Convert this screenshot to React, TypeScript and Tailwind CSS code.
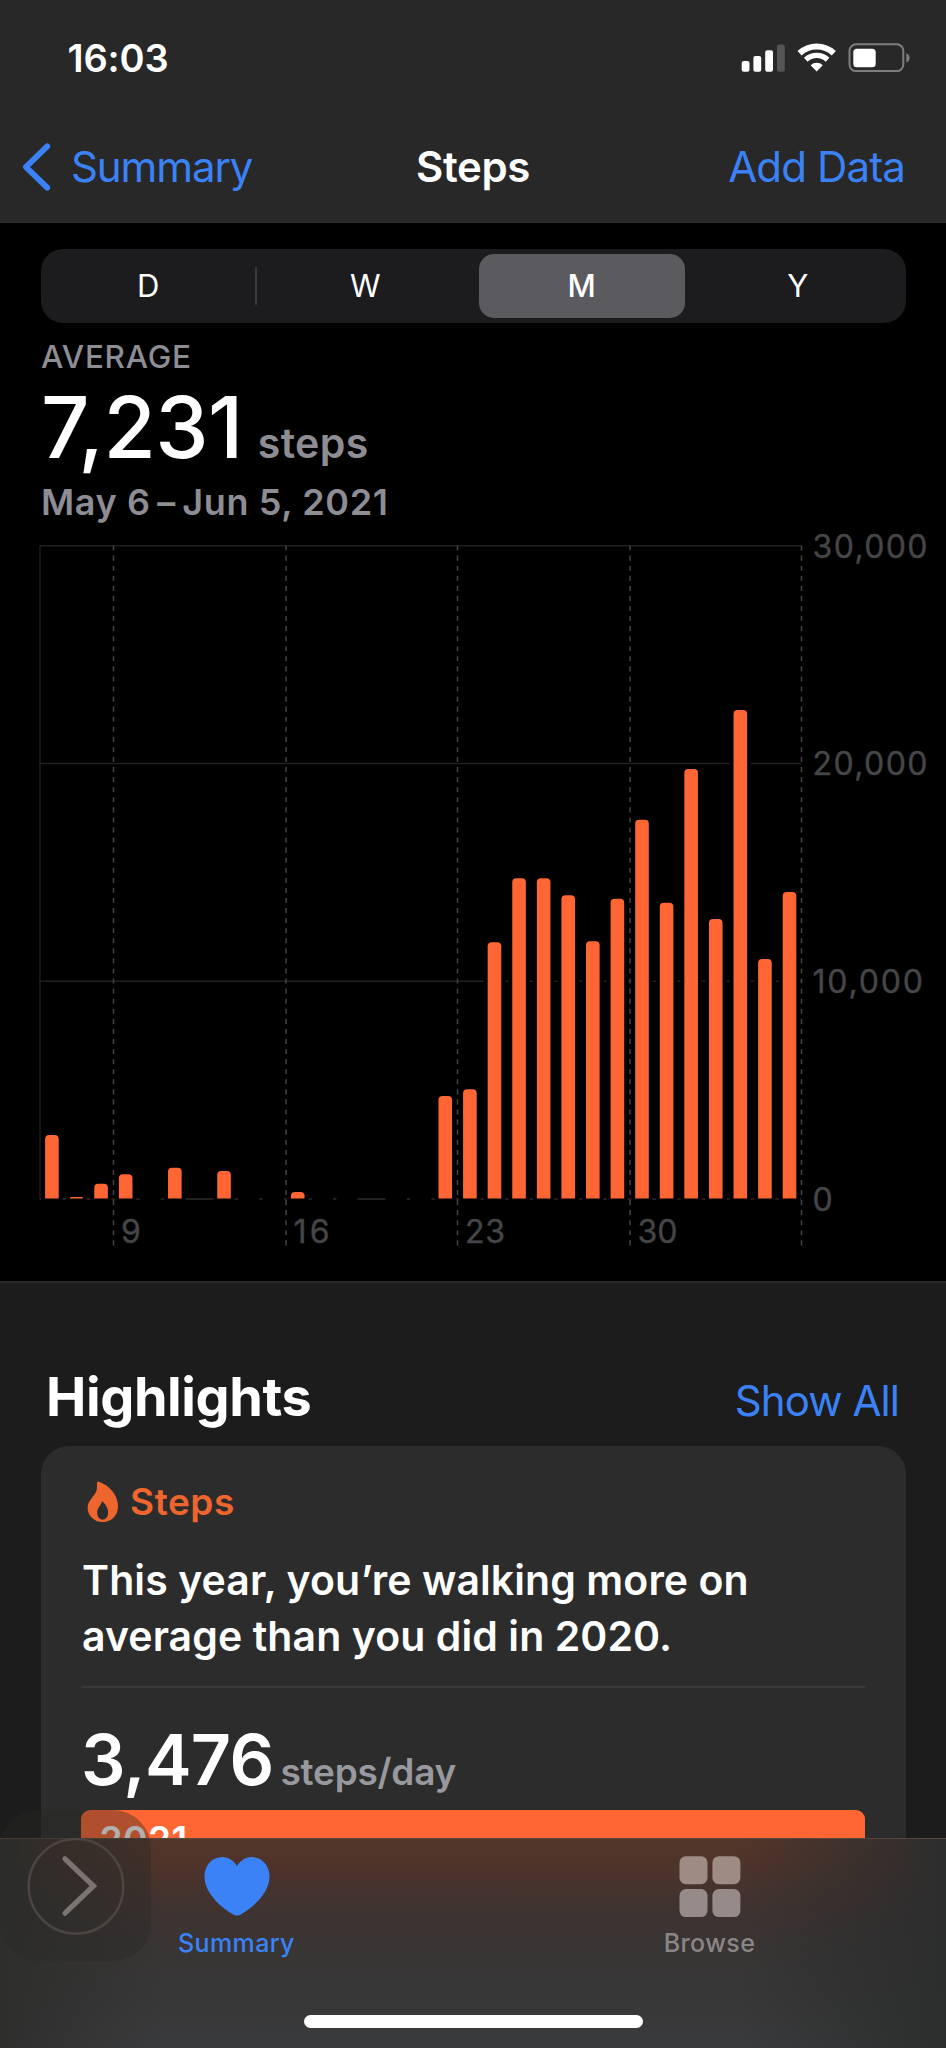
import { useState } from "react";
import { clsx } from "clsx";

type Bar = { day: number; top: number };

const ranges = ["D", "W", "M", "Y"];

// y of each bar's top on the chart canvas, day 0 is May 6
const bars: Bar[] = [
  { day: 0, top: 613 },
  { day: 1, top: 675 },
  { day: 2, top: 661.7 },
  { day: 3, top: 652.2 },
  { day: 5, top: 645.7 },
  { day: 7, top: 649 },
  { day: 10, top: 670 },
  { day: 16, top: 574 },
  { day: 17, top: 567.3 },
  { day: 18, top: 420.3 },
  { day: 19, top: 356.3 },
  { day: 20, top: 356.3 },
  { day: 21, top: 373.3 },
  { day: 22, top: 419.3 },
  { day: 23, top: 376.7 },
  { day: 24, top: 297.7 },
  { day: 25, top: 380.7 },
  { day: 26, top: 247 },
  { day: 27, top: 397 },
  { day: 28, top: 188 },
  { day: 29, top: 437 },
  { day: 30, top: 370 },
];

// days with too few steps to draw, they still interrupt the base line
const emptyDays = [4, 8, 9, 11, 12, 14, 15];

const BASE = 676.6;
const barX = (day: number) => 45.1 + day * 24.587;

const barPath = (x: number, top: number) => {
  const r = Math.min(4, BASE - top);
  const right = x + 13.6;
  return `M${x} ${BASE}V${top + r}Q${x} ${top} ${x + r} ${top}H${right - r}Q${right} ${top} ${right} ${top + r}V${BASE}Z`;
};

const yTicks = [
  { label: "30,000", y: 23.7, width: 113.5 },
  { label: "20,000", y: 241.5, width: 113.5 },
  { label: "10,000", y: 459.2, width: 109 },
  { label: "0", y: 677, width: 19 },
];

const xTicks = [
  { label: "9", x: 113.5, width: 19 },
  { label: "16", x: 286, width: 36 },
  { label: "23", x: 457.5, width: 40 },
  { label: "30", x: 630, width: 40 },
  { label: "", x: 801.5, width: 0 },
];

const StatusIcons = () => (
  <svg width="172" height="32" viewBox="740 42 172 32" fill="none">
    <rect x="741.7" y="61" width="7.8" height="10.8" rx="2" fill="#fff" />
    <rect x="753.4" y="56" width="7.8" height="15.8" rx="2" fill="#fff" />
    <rect x="765.2" y="50.3" width="7.8" height="21.5" rx="2" fill="#fff" />
    <rect x="777" y="44.4" width="7.8" height="27.4" rx="2" fill="#555" />
    <path d="M799.6 53.2A25 25 0 0 1 833.8 53.2" stroke="#fff" strokeWidth="6" />
    <path d="M805.8 59.7A16 16 0 0 1 827.6 59.7" stroke="#fff" strokeWidth="5.4" />
    <path d="M810.6 65.3A8.8 8.8 0 0 1 822.8 65.3L816.7 71.6Z" fill="#fff" />
    <rect x="849.5" y="44.3" width="53.8" height="26.8" rx="6.5" stroke="#7e7e7e" strokeWidth="2" />
    <rect x="853.3" y="48.7" width="22.4" height="18.6" rx="3.5" fill="#fff" />
    <path d="M906.3 53.3C908.4 54.2 909.6 55.8 909.6 57.9S908.4 61.6 906.3 62.5Z" fill="#7e7e7e" />
  </svg>
);

const FlameIcon = () => (
  <svg width="32" height="42" viewBox="0 0 32 42">
    <path
      fillRule="evenodd"
      fill="#ee652e"
      d="M9.9 2.3C9.7 1 10.8.4 12 .8C22.5 4.5 31 14 31 25.3C31 34.7 24.5 41 15.7 41C7 41 .6 35 .6 26.3C.6 17.8 10.8 14.500 10 5.2ZM14.7 21.1C13.6 25 10.2 27 10.2 31.7C10.2 35.6 12.3 38.5 15.7 38.5C19 38.5 21.1 35.8 21.1 31.5C21.1 27 18.500 23 15.7 20.8C15.2 20.5 14.9 20.5 14.7 21.1Z"
    />
  </svg>
);

const StepsChart = () => (
  <svg width="946" height="758" viewBox="0 0 946 758" className="block -ml-[41px]" fontFamily="Inter, sans-serif" fontSize="32" fill="#464649">
    <path d="M40 677V23.5" stroke="#1b1b1d" strokeWidth="1.5" />
    {yTicks.map((tick) => (
      <path key={tick.label} d={`M39.500 ${tick.y}H801.500`} stroke={tick.label === "0" ? "#2c2c2e" : "#202022"} strokeWidth="1.5" />
    ))}
    {[...emptyDays, ...bars.map((bar) => bar.day)].map((day) => {
      const bar = bars.find((b) => b.day === day);
      const top = (bar ? bar.top : BASE) - 4;
      return <rect key={day} x={barX(day) - 3.8} y={top} width="21.2" height={BASE + 1.5 - top} fill="#000" />;
    })}
    {xTicks.map((tick) => (
      <path key={tick.x} d={`M${tick.x} 23.500V726`} stroke="#434345" strokeWidth="1.5" strokeDasharray="5.1 4.97" />
    ))}
    {bars.map((bar) => (
      <path key={bar.day} d={barPath(barX(bar.day), bar.top)} fill="#ff6633" />
    ))}
    {yTicks.map((tick) => (
      <text key={tick.label} x="812.5" y={tick.y + 11.8} textLength={tick.width + 1.5} stroke="#464649" strokeWidth="0.4">
        {tick.label}
      </text>
    ))}
    {xTicks.map((tick) => (
      <text key={tick.x} x={tick.x + 7.5} y="721.2" textLength={tick.width || undefined} stroke="#464649" strokeWidth="0.4">
        {tick.label}
      </text>
    ))}
  </svg>
);

const App = () => {
  const [range, setRange] = useState("M");

  return (
    <div className="relative flex h-[2048px] w-[946px] flex-col overflow-hidden bg-black font-['Inter',sans-serif] text-white">
      {/* Header */}
      <header className="h-[223px] shrink-0 border-b border-[#2b2b2c] bg-[#282828]">
        <div className="flex h-[116px] items-center justify-between pl-[67.5px] pr-[34px]">
          <span className="text-[38px] font-semibold tracking-[-0.14px]">16:03</span>
          <StatusIcons />
        </div>
        <div className="grid h-[101px] grid-cols-[1fr_auto_1fr] items-center text-[42px] leading-[60px]">
          <button className="flex items-center gap-[19px] pl-[22px] text-[#3b82f7]">
            <svg width="30" height="50" viewBox="0 0 30 50" fill="none" className="shrink-0">
              <path d="M25.2 4.300L3.9 25L25.2 45.700" stroke="currentColor" strokeWidth="5.900" strokeLinecap="round" strokeLinejoin="round" />
            </svg>
            <span className="tracking-[-1.1px]">Summary</span>
          </button>
          <h1 className="font-semibold tracking-[-0.35px]">Steps</h1>
          <button className="pr-[41px] text-right tracking-[-0.85px] text-[#3b82f7]">Add Data</button>
        </div>
      </header>

      {/* Chart */}
      <main className="h-[1058px] shrink-0 px-[41px] pt-[26px]">
        <div className="flex h-[74px] w-[865px] rounded-[22px] bg-[#1c1c1e]">
          {ranges.map((item, index) => (
            <div key={item} className="flex flex-1 items-center">
              <button
                onClick={() => setRange(item)}
                className={clsx(
                  "h-[64px] flex-1 rounded-[15px] text-[31px]",
                  item === range ? "mx-[5px] bg-[#5b5a5f] font-medium" : "font-normal"
                )}
              >
                {item}
              </button>
              {index === 0 && <span className="h-[38px] w-[2px] rounded-full bg-[#3c3c3f]" />}
            </div>
          ))}
        </div>

        <p className="mt-3.5 h-10 text-[31.5px] font-medium leading-10 tracking-[0.74px] text-[#8d8d93]">AVERAGE</p>
        <div className="mt-[11px] flex h-20 items-baseline leading-[80px]">
          <span className="text-[85px] font-medium tracking-[-0.59px]">7,231</span>
          <span className="ml-[15px] text-[41px] font-semibold tracking-[0.39px] text-[#8d8d93]">steps</span>
        </div>
        <p className="mt-[14px] h-10 text-[36px] font-semibold leading-10 tracking-[0.62px] text-[#8d8d93]">
          May 6<span className="mx-[6.500px]">–</span>Jun 5, 2021
        </p>
        <StepsChart />
      </main>

      {/* Highlights */}
      <section className="flex-1 border-t-2 border-[#29292a] bg-[#1c1c1c] pt-[74px]">
        <div className="flex h-20 items-baseline justify-between pl-[46px] pr-[47px] leading-[80px]">
          <h2 className="text-[54px] font-bold tracking-[-0.4px]">Highlights</h2>
          <button className="text-[42px] tracking-[-0.93px] text-[#3b82f7]">Show All</button>
        </div>

        <div className="ml-[40.5px] mt-[9px] h-[640px] w-[865px] rounded-[28px] bg-[#2c2c2c] px-[40.5px] pt-[36px]">
          <div className="flex h-10 items-center pl-[6px]">
            <FlameIcon />
            <span className="ml-[11px] text-[37px] font-semibold tracking-[0.57px] text-[#ee652e]">Steps</span>
          </div>
          <p className="mt-[31px] whitespace-nowrap pl-px text-[41px] font-semibold leading-[55.5px] tracking-[0.08px]">
            This year, you’re walking more on
            <br />
            average than you did in 2020.
          </p>
          <div className="mt-[22px] h-[2px] bg-[#39393a]" />
          <div className="mt-[37px] flex h-[70px] items-baseline leading-[70px]">
            <span className="text-[70px] font-semibold tracking-[-0.7px]">3,476</span>
            <span className="ml-[7px] text-[37px] font-semibold tracking-[-0.25px] text-[#98989f]">steps/day</span>
          </div>
          <div className="mt-[15px] h-[60px] rounded-[9px] bg-[#ff6633] pl-[18.5px] text-[37px] font-semibold leading-[60px] tracking-[0.5px]">
            2021
          </div>
        </div>
      </section>

      {/* Tab bar */}
      <nav className="absolute inset-x-0 bottom-0 h-[210px] border-t border-[#58453e] bg-[linear-gradient(to_right,#2e2e2d_0%,#2e2e2d00_17%,#2c2d2d00_78%,#2c2d2d_100%),linear-gradient(to_bottom,#54362a_0%,#50342a_10%,#45332d_24%,#3e3331_36%,#383534_52%,#373737_75%,#3a3b3d_100%)]">
        <div className="grid grid-cols-2">
          <button className="flex flex-col items-center pt-[17px] text-[#3b82f7]">
            <svg width="66" height="62" viewBox="0 0 66 62">
              <path
                fill="currentColor"
                d="M33 10C29.5 4.600 24.5 1 18.5 1C8 1 .5 9.300 .5 20.5C.5 36 15 50 28.500 58C30.200 59 31.700 59.500 33 59.500S35.800 59 37.500 58C51 50 65.500 36 65.500 20.500C65.500 9.300 58 1 47.500 1C41.500 1 36.500 4.600 33 10Z"
              />
            </svg>
            <span className="mt-[9px] text-[25px] font-medium leading-[32px] tracking-[0.36px]">Summary</span>
          </button>
          <button className="flex flex-col items-center pt-[17px]">
            <svg width="62" height="62" viewBox="0 0 62 62">
              <rect x="0.5" y="0.2" width="28" height="28" rx="6.5" fill="#9e8b84" />
              <rect x="33.4" y="0.2" width="28" height="28" rx="6.5" fill="#9e8b84" />
              <rect x="0.5" y="33.1" width="28" height="28" rx="6.5" fill="#968b89" />
              <rect x="33.4" y="33.1" width="28" height="28" rx="6.5" fill="#968b89" />
            </svg>
            <span className="mt-[9px] text-[25px] font-medium leading-[32px] tracking-[0.4px] text-[#8b8685]">Browse</span>
          </button>
        </div>
        <div className="absolute bottom-[20px] left-[304px] h-[13px] w-[339px] rounded-full bg-white" />
      </nav>

      {/* Floating switch control */}
      <div className="absolute bottom-[87px] left-0 flex h-[151px] w-[151px] items-center justify-center rounded-[38px] bg-[#282826]/37">
        <svg width="100" height="100" viewBox="0 0 100 100" fill="none">
          <circle cx="50" cy="50.3" r="47.3" stroke="#4b4441" strokeWidth="2.6" />
          <path d="M39 22.8L67.5 50L39 77.2" stroke="#7a7472" strokeWidth="5.2" strokeLinecap="round" />
        </svg>
      </div>
    </div>
  );
};

export default App;
